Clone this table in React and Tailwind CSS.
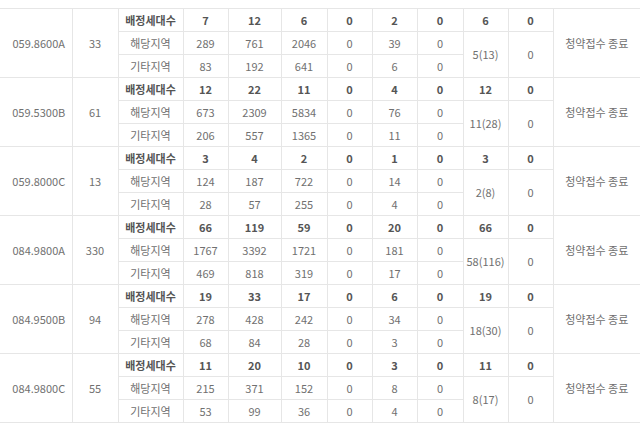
import React from "react";

const groups = [
  {
    type: "059.8600A",
    total: 33,
    rows: [
      [7, 12, 6, 0, 2, 0],
      [289, 761, 2046, 0, 39, 0],
      [83, 192, 641, 0, 6, 0],
    ],
    special: [6, 0],
    merged: ["5(13)", 0],
  },
  {
    type: "059.5300B",
    total: 61,
    rows: [
      [12, 22, 11, 0, 4, 0],
      [673, 2309, 5834, 0, 76, 0],
      [206, 557, 1365, 0, 11, 0],
    ],
    special: [12, 0],
    merged: ["11(28)", 0],
  },
  {
    type: "059.8000C",
    total: 13,
    rows: [
      [3, 4, 2, 0, 1, 0],
      [124, 187, 722, 0, 14, 0],
      [28, 57, 255, 0, 4, 0],
    ],
    special: [3, 0],
    merged: ["2(8)", 0],
  },
  {
    type: "084.9800A",
    total: 330,
    rows: [
      [66, 119, 59, 0, 20, 0],
      [1767, 3392, 1721, 0, 181, 0],
      [469, 818, 319, 0, 17, 0],
    ],
    special: [66, 0],
    merged: ["58(116)", 0],
  },
  {
    type: "084.9500B",
    total: 94,
    rows: [
      [19, 33, 17, 0, 6, 0],
      [278, 428, 242, 0, 34, 0],
      [68, 84, 28, 0, 3, 0],
    ],
    special: [19, 0],
    merged: ["18(30)", 0],
  },
  {
    type: "084.9800C",
    total: 55,
    rows: [
      [11, 20, 10, 0, 3, 0],
      [215, 371, 152, 0, 8, 0],
      [53, 99, 36, 0, 4, 0],
    ],
    special: [11, 0],
    merged: ["8(17)", 0],
  },
];

const labels = ["배정세대수", "해당지역", "기타지역"];
const widths = [72, 46, 65, 45, 53, 46, 45, 45, 46, 45, 45, 87];

const cell = "border border-[#e6e6e6] text-center align-middle p-0";
const bold = "font-bold text-[#555]";

const Group = ({ g }) => (
  <>
    {g.rows.map((row, i) => (
      <tr key={i} className={i === 0 ? "h-[23px] border-t border-[#d8d8d8]" : "h-[23px]"}>
        {i === 0 && (
          <>
            <td rowSpan={3} className={`${cell} border-l-0 pl-[6px]`}>
              {g.type}
            </td>
            <td rowSpan={3} className={cell}>
              {g.total}
            </td>
          </>
        )}
        <td className={`${cell} ${i === 0 ? bold : ""}`}>{labels[i]}</td>
        {row.map((v, j) => (
          <td key={j} className={`${cell} ${i === 0 ? bold : ""}`}>
            {v}
          </td>
        ))}
        {i === 0 && (
          <>
            <td className={`${cell} ${bold}`}>{g.special[0]}</td>
            <td className={`${cell} ${bold}`}>{g.special[1]}</td>
            <td rowSpan={3} className={`${cell} border-r-0`}>
              청약접수 종료
            </td>
          </>
        )}
        {i === 1 && (
          <>
            <td rowSpan={2} className={cell}>
              {g.merged[0]}
            </td>
            <td rowSpan={2} className={cell}>
              {g.merged[1]}
            </td>
          </>
        )}
      </tr>
    ))}
  </>
);

export default function App() {
  return (
    <div
      className="w-[640px] h-[423px] overflow-hidden bg-white pt-2 text-[11px] text-[#707070]"
      style={{ fontFamily: '"Noto Sans CJK KR", "Noto Sans", sans-serif' }}
    >
      <table className="w-[640px] table-fixed border-collapse">
        <colgroup>
          {widths.map((w, i) => (
            <col key={i} style={{ width: w }} />
          ))}
        </colgroup>
        <tbody>
          {groups.map((g) => (
            <Group key={g.type} g={g} />
          ))}
        </tbody>
      </table>
    </div>
  );
}
